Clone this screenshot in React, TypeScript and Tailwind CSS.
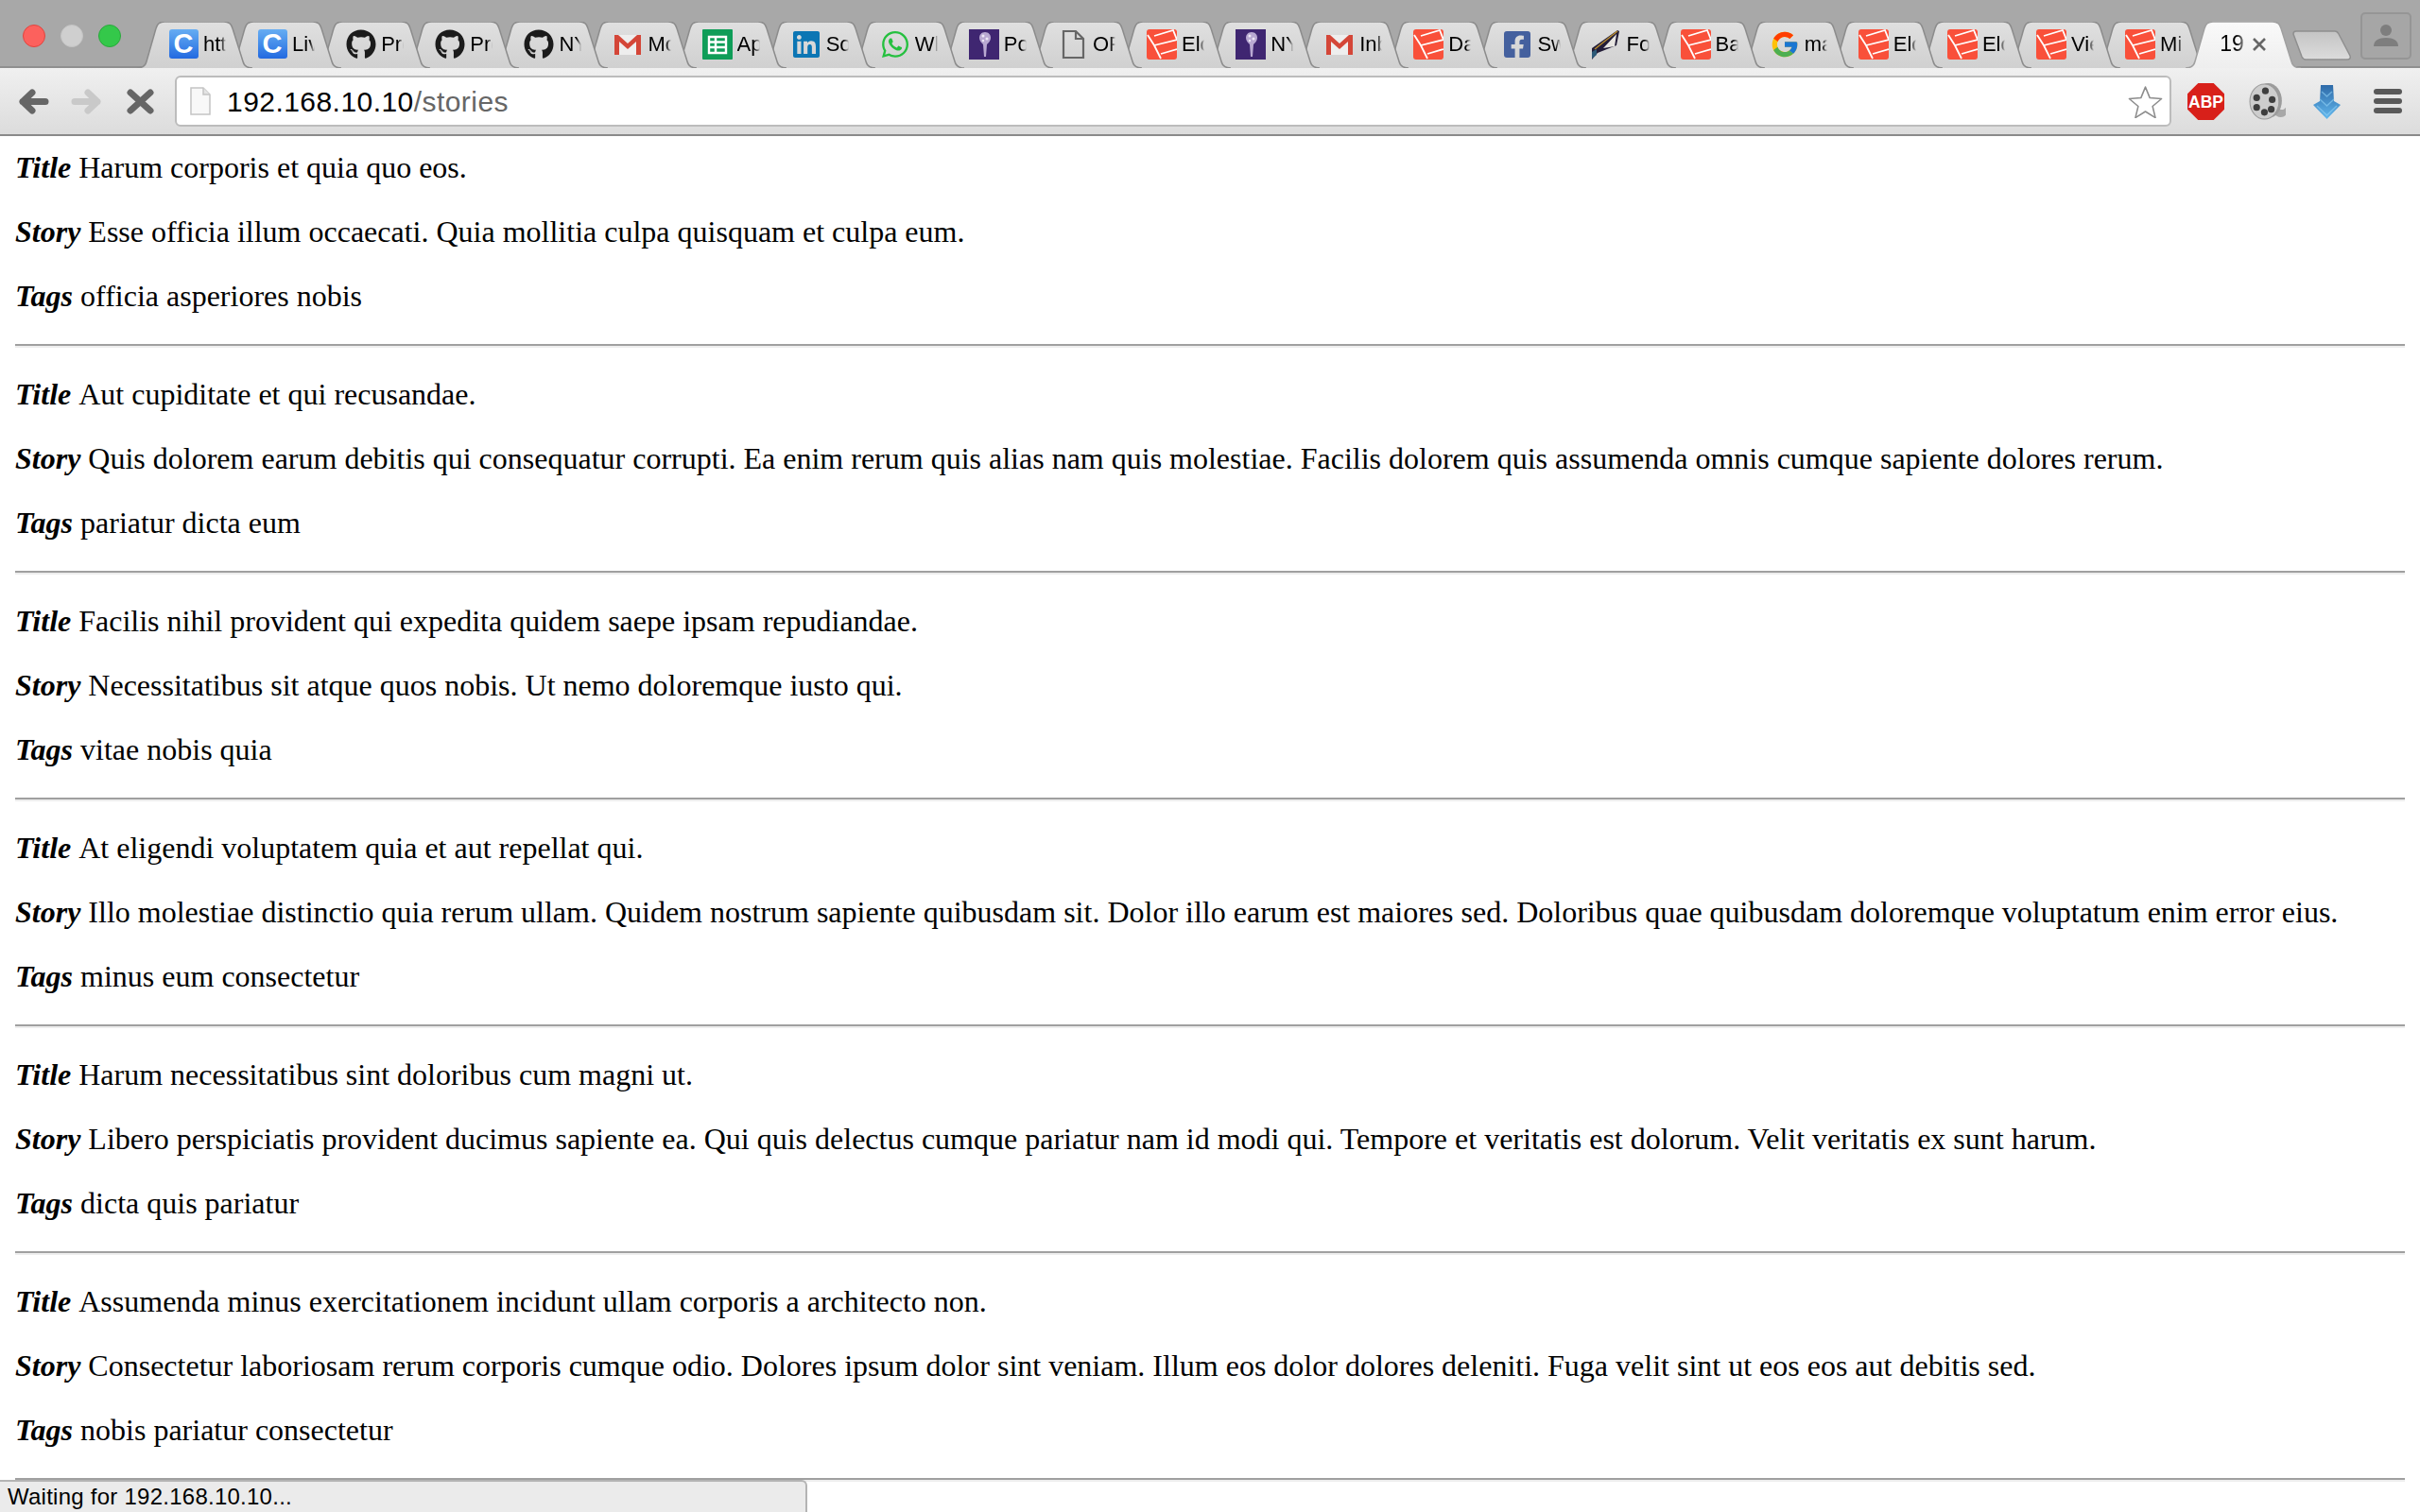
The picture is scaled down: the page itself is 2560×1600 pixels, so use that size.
import { FaGithub, FaWhatsapp, FaLinkedin, FaFacebookSquare } from "react-icons/fa";
import { FcGoogle } from "react-icons/fc";

const STORIES = [
  {
    title: "Harum corporis et quia quo eos.",
    story: "Esse officia illum occaecati. Quia mollitia culpa quisquam et culpa eum.",
    tags: "officia asperiores nobis",
  },
  {
    title: "Aut cupiditate et qui recusandae.",
    story: "Quis dolorem earum debitis qui consequatur corrupti. Ea enim rerum quis alias nam quis molestiae. Facilis dolorem quis assumenda omnis cumque sapiente dolores rerum.",
    tags: "pariatur dicta eum",
  },
  {
    title: "Facilis nihil provident qui expedita quidem saepe ipsam repudiandae.",
    story: "Necessitatibus sit atque quos nobis. Ut nemo doloremque iusto qui.",
    tags: "vitae nobis quia",
  },
  {
    title: "At eligendi voluptatem quia et aut repellat qui.",
    story: "Illo molestiae distinctio quia rerum ullam. Quidem nostrum sapiente quibusdam sit. Dolor illo earum est maiores sed. Doloribus quae quibusdam doloremque voluptatum enim error eius.",
    tags: "minus eum consectetur",
  },
  {
    title: "Harum necessitatibus sint doloribus cum magni ut.",
    story: "Libero perspiciatis provident ducimus sapiente ea. Qui quis delectus cumque pariatur nam id modi qui. Tempore et veritatis est dolorum. Velit veritatis ex sunt harum.",
    tags: "dicta quis pariatur",
  },
  {
    title: "Assumenda minus exercitationem incidunt ullam corporis a architecto non.",
    story: "Consectetur laboriosam rerum corporis cumque odio. Dolores ipsum dolor sint veniam. Illum eos dolor dolores deleniti. Fuga velit sint ut eos eos aut debitis sed.",
    tags: "nobis pariatur consectetur",
  },
];

const TABS = [
  { icon: "c", label: "htt" },
  { icon: "c", label: "Liv" },
  { icon: "github", label: "Pro" },
  { icon: "github", label: "Pro" },
  { icon: "github", label: "NY" },
  { icon: "gmail", label: "Mo" },
  { icon: "sheets", label: "Ap" },
  { icon: "linkedin", label: "So" },
  { icon: "whatsapp", label: "Wh" },
  { icon: "nyu", label: "Po" },
  { icon: "doc", label: "OP" },
  { icon: "laravel", label: "Elo" },
  { icon: "nyu", label: "NY" },
  { icon: "gmail", label: "Inb" },
  { icon: "laravel", label: "Da" },
  { icon: "facebook", label: "Sw" },
  { icon: "feather", label: "Fo" },
  { icon: "laravel", label: "Ba" },
  { icon: "google", label: "ma" },
  { icon: "laravel", label: "Elo" },
  { icon: "laravel", label: "Elo" },
  { icon: "laravel", label: "Vie" },
  { icon: "laravel", label: "Mig" },
];

function Favicon({ icon }: { icon: string }) {
  switch (icon) {
    case "c":
      return (
        <div className="w-[31px] h-[31px] rounded-[3px] bg-gradient-to-b from-[#66adf2] to-[#2369e0] flex items-center justify-center text-white text-[29px] leading-none font-bold font-['Liberation_Sans',sans-serif]">
          C
        </div>
      );
    case "github":
      return <FaGithub className="w-[32px] h-[32px] text-[#1b1b1b]" />;
    case "linkedin":
      return <FaLinkedin className="w-[32px] h-[32px] text-[#0c76b4]" />;
    case "whatsapp":
      return <FaWhatsapp className="w-[32px] h-[32px] text-[#25c03f]" />;
    case "facebook":
      return <FaFacebookSquare className="w-[32px] h-[32px] text-[#44609e]" />;
    case "google":
      return <FcGoogle className="w-[32px] h-[32px]" />;
    case "gmail":
      return (
        <svg viewBox="0 0 32 32" className="w-[32px] h-[32px]">
          <rect x="2" y="6" width="28" height="21" fill="#eeeeee" />
          <path d="M2 27V6h4l10 9 10-9h4v21h-5V13l-9 8-9-8v14z" fill="#d44638" />
        </svg>
      );
    case "sheets":
      return (
        <svg viewBox="0 0 32 32" className="w-[32px] h-[32px]">
          <rect width="32" height="32" rx="1" fill="#0f9d58" />
          <path d="M7 8h18v17H7zM7 13.5h18M7 19h18M14 8v17" fill="none" stroke="#fff" strokeWidth="2.4" />
        </svg>
      );
    case "nyu":
      return (
        <svg viewBox="0 0 32 32" className="w-[32px] h-[32px]">
          <rect width="32" height="32" fill="#3f2671" />
          <path d="M17 3c4 0 6 3 6 6 0 3-2 5-4 7l-1 13h-2l-1-13c-2-2-4-4-4-7 0-3 2-6 6-6z" fill="#b9a9d2" />
          <circle cx="15" cy="7" r="1.500" fill="#eee8f6" />
          <circle cx="19" cy="10" r="1.500" fill="#eee8f6" />
          <circle cx="15" cy="12" r="1.200" fill="#eee8f6" />
        </svg>
      );
    case "doc":
      return (
        <svg viewBox="0 0 32 32" className="w-[32px] h-[32px]" fill="none" stroke="#666" strokeWidth="2.2">
          <path d="M6 2h13l8 8v20H6zM19 2v8h8" />
        </svg>
      );
    case "laravel":
      return (
        <svg viewBox="0 0 32 32" className="w-[32px] h-[32px]">
          <rect width="32" height="32" rx="3" fill="#f9503a" />
          <path d="M1 6L8 17 15 31M8 17L32 11M8 7L28 1 32 11M15 26L32 21" fill="none" stroke="#fff" strokeWidth="1.800" />
        </svg>
      );
    case "feather":
      return (
        <svg viewBox="0 0 32 32" className="w-[32px] h-[32px]">
          <path d="M0 20L27 1 29 2 26 17 6 25 0 32z" fill="#231d38" />
          <path d="M12 20L26 5 24 18z" fill="#e8e6e2" />
          <path d="M3 21L27 2" stroke="#b98c2e" strokeWidth="1.500" />
          <path d="M0 24L5 21V27L0 31z" fill="#2d5a78" />
        </svg>
      );
    default:
      return null;
  }
}

function TabShape({ active }: { active?: boolean }) {
  const d = "M0 49C6 49 9 46 10 42L20 7C21 3 24 0 29 0H92C97 0 100 3 101 7L112 42C113 46 116 49 122 49";
  return (
    <svg viewBox="0 0 122 49" className="absolute left-0 top-0 w-[122px] h-[49px]">
      <defs>
        <linearGradient id={active ? "tabActive" : "tabIdle"} x1="0" y1="0" x2="0" y2="1">
          <stop offset="0" stopColor={active ? "#fafafa" : "#e0e0e0"} />
          <stop offset="1" stopColor={active ? "#eeeeee" : "#d0d0d0"} />
        </linearGradient>
      </defs>
      <path d={d} fill={active ? "url(#tabActive)" : "url(#tabIdle)"} stroke={active ? "#a0a0a0" : "#8c8c8c"} strokeWidth="1.5" />
    </svg>
  );
}

function Tab({ icon, label, z }: { icon: string; label: string; z: number }) {
  return (
    <div className="relative flex-none w-[94.1px] h-[49px]" style={{ zIndex: z }}>
      <TabShape />
      <div className="relative flex items-center h-[49px] pl-[33px] pb-[2px]">
        <div className="w-[32px] flex-none flex justify-center"><Favicon icon={icon} /></div>
        <div className="ml-[5px] w-[28px] overflow-hidden whitespace-nowrap text-[22px] text-black [mask-image:linear-gradient(to_right,black_78%,transparent)]">
          {label}
        </div>
      </div>
    </div>
  );
}

function Field({ name, value }: { name: string; value: string }) {
  return (
    <p className="mb-8 h-[36px] leading-[34px] whitespace-nowrap">
      <b><i>{name}</i></b><span className="[font-kerning:none]"> </span>{value}
    </p>
  );
}

export default function App() {
  return (
    <div className="relative h-screen overflow-hidden bg-white font-['Liberation_Sans',Arial,sans-serif]">
      {/* Title bar + tabs */}
      <div className="flex items-start h-[72px] bg-[#a8a8a8] border-b-2 border-[#8f8f8f]">
        <div className="flex gap-[16px] ml-[24px] mt-[26px]">
          <div className="w-[24px] h-[24px] rounded-full bg-[#fc615d] border border-[#e0443e]" />
          <div className="w-[24px] h-[24px] rounded-full bg-[#cfcfcf] border border-[#c4c4c4]" />
          <div className="w-[24px] h-[24px] rounded-full bg-[#34c84a] border border-[#2aa83c]" />
        </div>
        <div className="flex ml-[17px] mt-[23px]">
          {TABS.map((t, i) => (
            <Tab key={i} icon={t.icon} label={t.label} z={40 - i} />
          ))}
          <div className="relative z-50 flex-none ml-[3px] w-[116px] h-[51px]">
            <TabShape active />
            <div className="relative flex items-center h-[49px] pl-[36px] pb-[2px] text-[23px] text-black">
              <span className="w-[35px] [mask-image:linear-gradient(to_right,black_50%,#0006_75%)]">19</span>
              <svg viewBox="0 0 14 14" className="w-[14px] h-[14px]" fill="none" stroke="#666" strokeWidth="2.6">
                <path d="M1 1L13 13M13 1L1 13" />
              </svg>
            </div>
          </div>
          <svg viewBox="0 0 62 32" className="relative z-10 flex-none w-[62px] h-[32px] mt-[9px] -ml-[3px]">
            <defs>
              <linearGradient id="newTab" x1="0" y1="0" x2="0" y2="1">
                <stop offset="0" stopColor="#c4c4c4" />
                <stop offset="1" stopColor="#dcdcdc" />
              </linearGradient>
            </defs>
            <path d="M1 4C1 2 2 1 4 1H45C47 1 48 2 49 4L61 27C62 30 60 31 58 31H14C12 31 11 30 10 28z" fill="url(#newTab)" stroke="#8f8f8f" strokeWidth="1.5" />
          </svg>
        </div>
        <div className="absolute right-[9px] top-[13px] w-[54px] h-[50px] rounded-[5px] bg-[#a6a6a6] border-2 border-[#959595] flex items-center justify-center">
          <svg viewBox="0 0 28 28" className="w-[28px] h-[28px]" fill="#7e7e7e">
            <circle cx="14" cy="8" r="6" />
            <path d="M1 25c0-6 5-9 13-9s13 3 13 9z" />
          </svg>
        </div>
      </div>

      {/* Toolbar */}
      <div className="flex items-center h-[72px] bg-gradient-to-b from-[#f0f0f0] to-[#dcdcdc] border-b-2 border-[#8a8a8a]">
        <svg viewBox="0 0 33 27" className="ml-[19px] w-[33px] h-[27px]" fill="none" stroke="#666" strokeWidth="7" strokeLinecap="round" strokeLinejoin="round">
          <path d="M29 13.5H5M15 4L5 13.5 15 23" />
        </svg>
        <svg viewBox="0 0 33 27" className="ml-[23px] w-[33px] h-[27px]" fill="none" stroke="#c9c9c9" strokeWidth="7" strokeLinecap="round" strokeLinejoin="round">
          <path d="M4 13.5H28M18 4L28 13.5 18 23" />
        </svg>
        <svg viewBox="0 0 29 27" className="ml-[26px] w-[29px] h-[27px]" fill="none" stroke="#666" strokeWidth="7" strokeLinecap="round">
          <path d="M4 4L25 23M25 4L4 23" />
        </svg>
        <div className="ml-[22px] w-[2112px] h-[54px] flex items-center bg-white border-2 border-[#bcbcbc] rounded-[6px]">
          <svg viewBox="0 0 22 30" className="ml-[14px] w-[22px] h-[30px]">
            <path d="M1 1H14L21 8V29H1z" fill="#f8f8f8" stroke="#c4c4c4" strokeWidth="1.5" />
            <path d="M14 1V8H21" fill="#e4e4e4" stroke="#c4c4c4" strokeWidth="1.5" />
          </svg>
          <div className="ml-[17px] text-[30px] tracking-[0.45px] whitespace-nowrap text-black">
            192.168.10.10<span className="text-[#666]">/stories</span>
          </div>
          <svg viewBox="0 0 36 34" className="ml-auto mr-[7px] w-[37px] h-[35px]">
            <path d="M18 2l4.600 11.200 12 .9-9.200 7.800 2.900 11.700L18 27.200 7.700 33.600l2.900-11.700-9.200-7.800 12-.9z" fill="#fff" stroke="#8c8c8c" strokeWidth="1.500" strokeLinejoin="round" />
          </svg>
        </div>
        <svg viewBox="0 0 38 38" className="ml-[17px] w-[39px] h-[39px]">
          <path d="M11 0H27L38 11V27L27 38H11L0 27V11z" fill="#d8201a" />
          <text x="19" y="25.500" textAnchor="middle" fill="#fff" fontSize="17" fontWeight="700" fontFamily="Liberation Sans">ABP</text>
        </svg>
        <svg viewBox="0 0 38 38" className="ml-[26px] w-[39px] h-[39px]">
          <path d="M24 30c4 5 10 7 14 3v-8c-2 3-5 3-7 1z" fill="#a8a8a8" />
          <ellipse cx="20" cy="18" rx="14" ry="18" fill="#9c9c9c" />
          <ellipse cx="16" cy="19" rx="15" ry="18" fill="#cdcdcd" stroke="#9a9a9a" />
          <circle cx="17" cy="8" r="3.500" fill="#3e3e3e" />
          <circle cx="16" cy="30" r="3.500" fill="#3e3e3e" />
          <circle cx="8" cy="15" r="3.500" fill="#3e3e3e" />
          <circle cx="24" cy="17" r="3.500" fill="#3e3e3e" />
          <circle cx="8" cy="25" r="3.500" fill="#3e3e3e" />
          <circle cx="23" cy="27" r="3.500" fill="#3e3e3e" />
        </svg>
        <svg viewBox="0 0 31 37" className="ml-[28px] w-[31px] h-[37px]">
          <defs>
            <linearGradient id="dl" x1="0" y1="0" x2="0" y2="1">
              <stop offset="0" stopColor="#2e6aa8" />
              <stop offset="1" stopColor="#62b8ee" />
            </linearGradient>
          </defs>
          <path d="M9 1H22L23 18 30 22 15.500 37 1 22 8 18z" fill="url(#dl)" />
          <path d="M10 8L15.500 13 21 8M8 16L15.500 23 23 16M5 23L15.500 33 26 23" fill="none" stroke="#8fd0f5" strokeOpacity="0.6" strokeWidth="1.500" />
        </svg>
        <div className="ml-[34px] w-[30px] flex flex-col gap-[4px]">
          <div className="h-[6px] rounded-[3px] bg-[#595959]" />
          <div className="h-[6px] rounded-[3px] bg-[#595959]" />
          <div className="h-[6px] rounded-[3px] bg-[#595959]" />
        </div>
      </div>

      {/* Page content */}
      <div className="px-4 pt-4 text-[32px] text-black font-['Liberation_Serif','Times_New_Roman',serif]">
        {STORIES.map((s, i) => (
          <div key={i}>
            <Field name="Title" value={s.title} />
            <Field name="Story" value={s.story} />
            <Field name="Tags" value={s.tags} />
            <hr className="mb-8 h-[4px] border-t-2 border-b-2 border-x-0 border-t-[#a0a0a0] border-b-[#eeeeee]" />
          </div>
        ))}
      </div>

      {/* Status bubble */}
      <div className="absolute left-0 bottom-0 w-[854px] h-[34px] flex items-center pl-[8px] bg-[#ebebeb] border-2 border-b-0 border-l-0 border-[#b4b4b4] rounded-tr-[6px] text-[24px] tracking-[0.25px] text-black whitespace-nowrap">
        Waiting for 192.168.10.10...
      </div>
    </div>
  );
}
